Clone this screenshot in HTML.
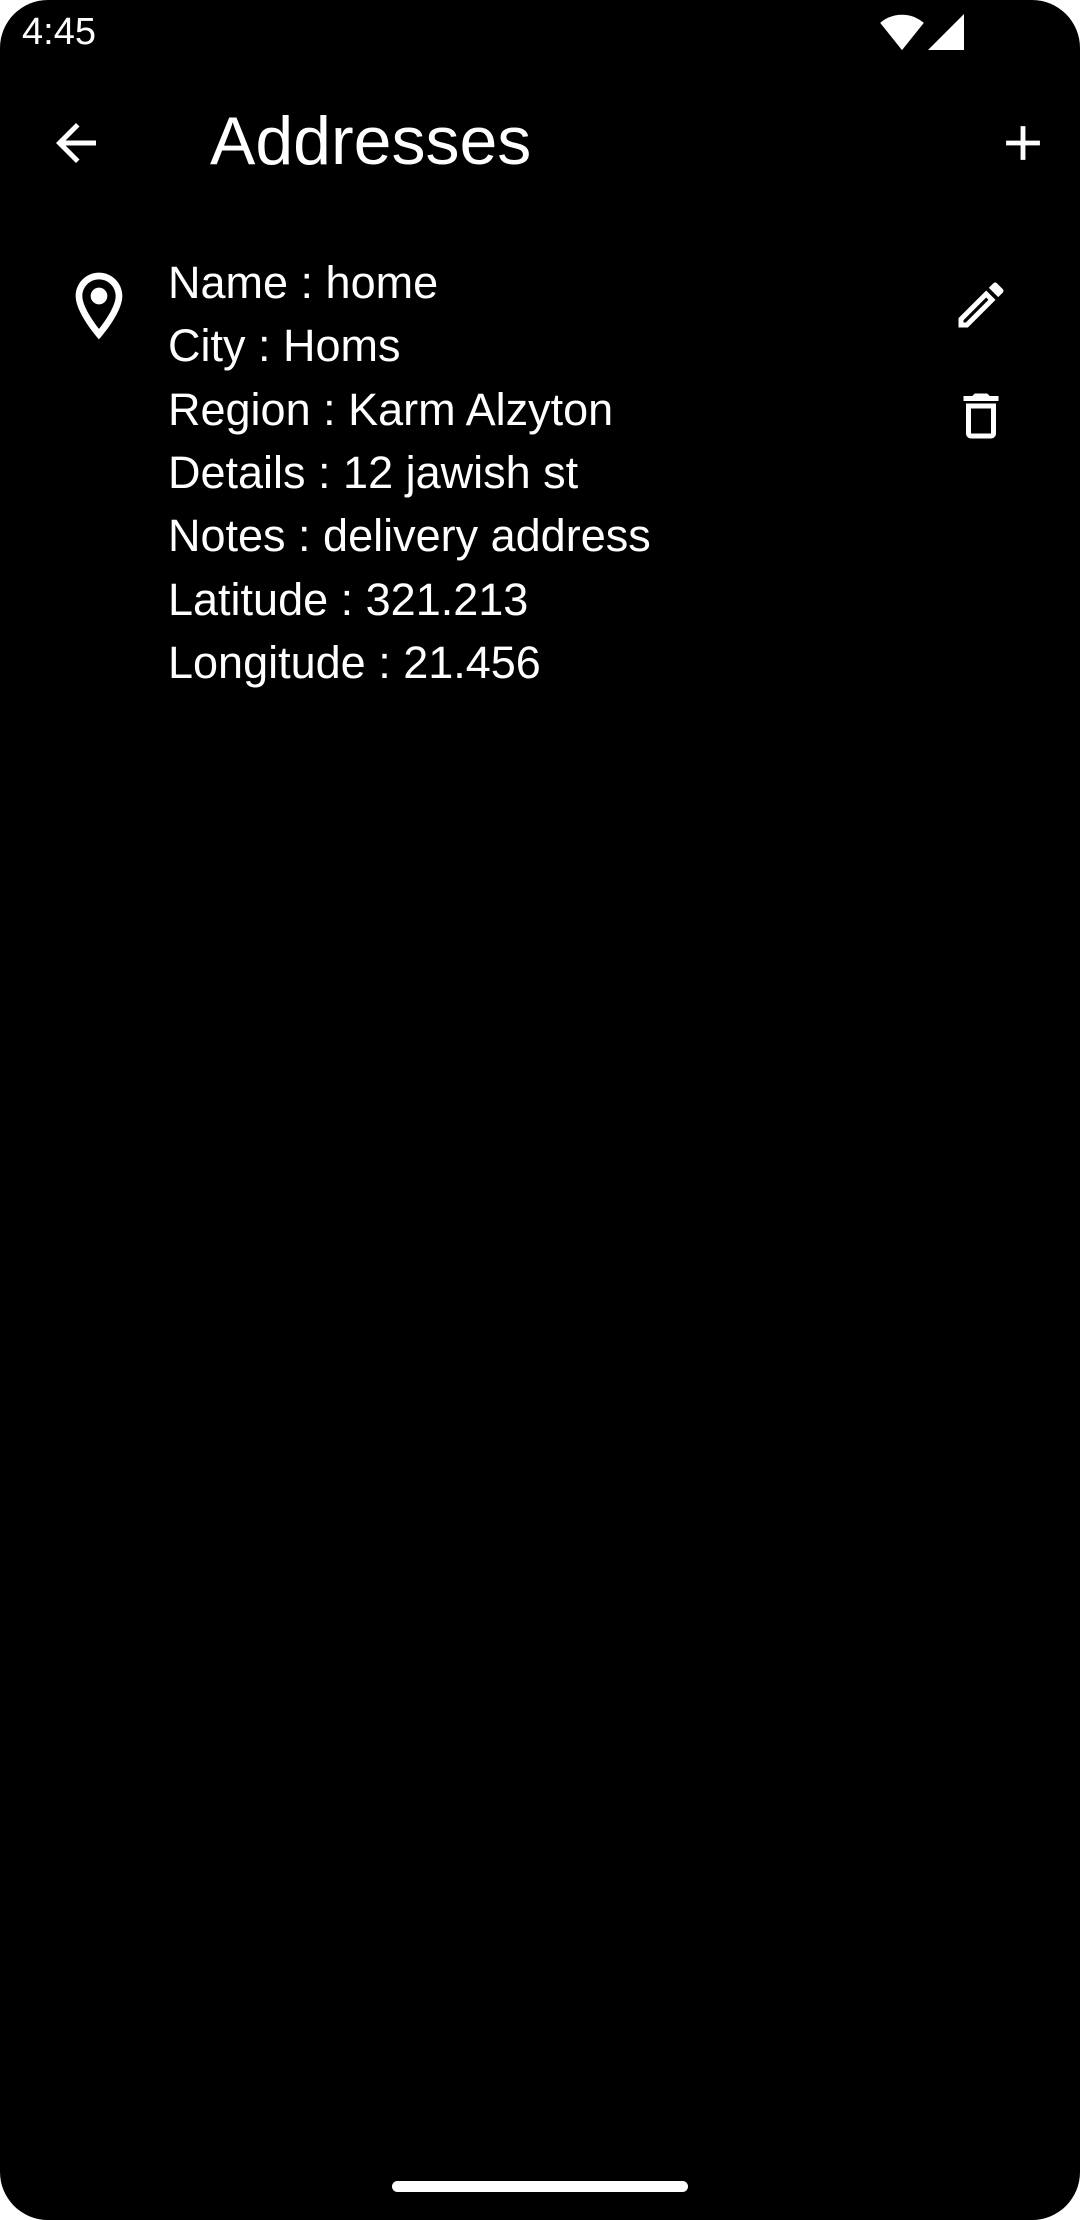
<!DOCTYPE html>
<html><head><meta charset="utf-8"><style>
html,body{margin:0;padding:0;width:1080px;height:2220px;background:#fff;overflow:hidden}
.scr{position:absolute;left:0;top:0;width:1080px;height:2220px;background:#000;border-radius:48px;color:#fff;font-family:"Liberation Sans",sans-serif}
.t{position:absolute;white-space:nowrap}
svg{position:absolute;fill:#fff}
.line{position:absolute;left:168px;font-size:45px;line-height:63px;white-space:nowrap}
</style></head><body><div class="scr">
<div class="t" style="left:22px;top:11px;font-size:38px">4:45</div>
<svg style="left:880px;top:12px" width="44" height="40" viewBox="0 0 24 22"><path d="M12 21L0 6C3.5 3 7.5 1.5 12 1.5S20.5 3 24 6z"/></svg>
<svg style="left:928px;top:14px" width="36" height="36" viewBox="0 0 24 24"><path d="M24 0V24H0z"/></svg>
<svg style="left:46px;top:113px" width="60" height="60" viewBox="0 0 24 24"><path d="M20 11H7.83l5.59-5.59L12 4l-8 8 8 8 1.41-1.41L7.83 13H20v-2z"/></svg>
<div class="t" style="left:210px;top:101px;font-size:68px;line-height:80px">Addresses</div>
<svg style="left:994px;top:114px" width="58" height="58" viewBox="0 0 24 24"><path d="M19 13h-6v6h-2v-6H5v-2h6V5h2v6h6v2z"/></svg>
<svg style="left:59px;top:266px" width="80" height="80" viewBox="0 0 24 24"><path d="M12 2C8.13 2 5 5.130 5 9c0 5.25 7 13 7 13s7-7.75 7-13c0-3.87-3.13-7-7-7zM7 9c0-2.760 2.24-5 5-5s5 2.24 5 5c0 2.88-2.88 7.19-5 9.88C9.92 16.21 7 11.85 7 9z"/><circle cx="12" cy="9" r="2.5"/></svg>
<div class="line" style="top:251px">Name : home</div>
<div class="line" style="top:314px">City : Homs</div>
<div class="line" style="top:378px">Region : Karm Alzyton</div>
<div class="line" style="top:441px">Details : 12 jawish st</div>
<div class="line" style="top:504px">Notes : delivery address</div>
<div class="line" style="top:568px">Latitude : 321.213</div>
<div class="line" style="top:631px">Longitude : 21.456</div>
<svg style="left:951px;top:275px" width="60" height="60" viewBox="0 0 24 24"><path d="M3 17.25V21h3.75L17.81 9.94l-3.75-3.75L3 17.25zM5.92 19H5v-.92l9.06-9.06.92.92L5.920 19zM20.71 5.63l-2.34-2.340c-.2-.2-.45-.29-.71-.29s-.51.1-.7.29l-1.83 1.83 3.75 3.75 1.83-1.83a.996.996 0 000-1.41z"/></svg>
<svg style="left:951px;top:386px" width="60" height="60" viewBox="0 0 24 24"><path d="M16 9v10H8V9h8m-1.5-6h-5l-1 1H5v2h14V4h-3.5l-1-1zM18 7H6v12c0 1.1.9 2 2 2h8c1.1 0 2-.9 2-2V7z"/></svg>
<div style="position:absolute;left:392px;top:2181px;width:296px;height:11px;border-radius:6px;background:#fff"></div>
</div></body></html>
